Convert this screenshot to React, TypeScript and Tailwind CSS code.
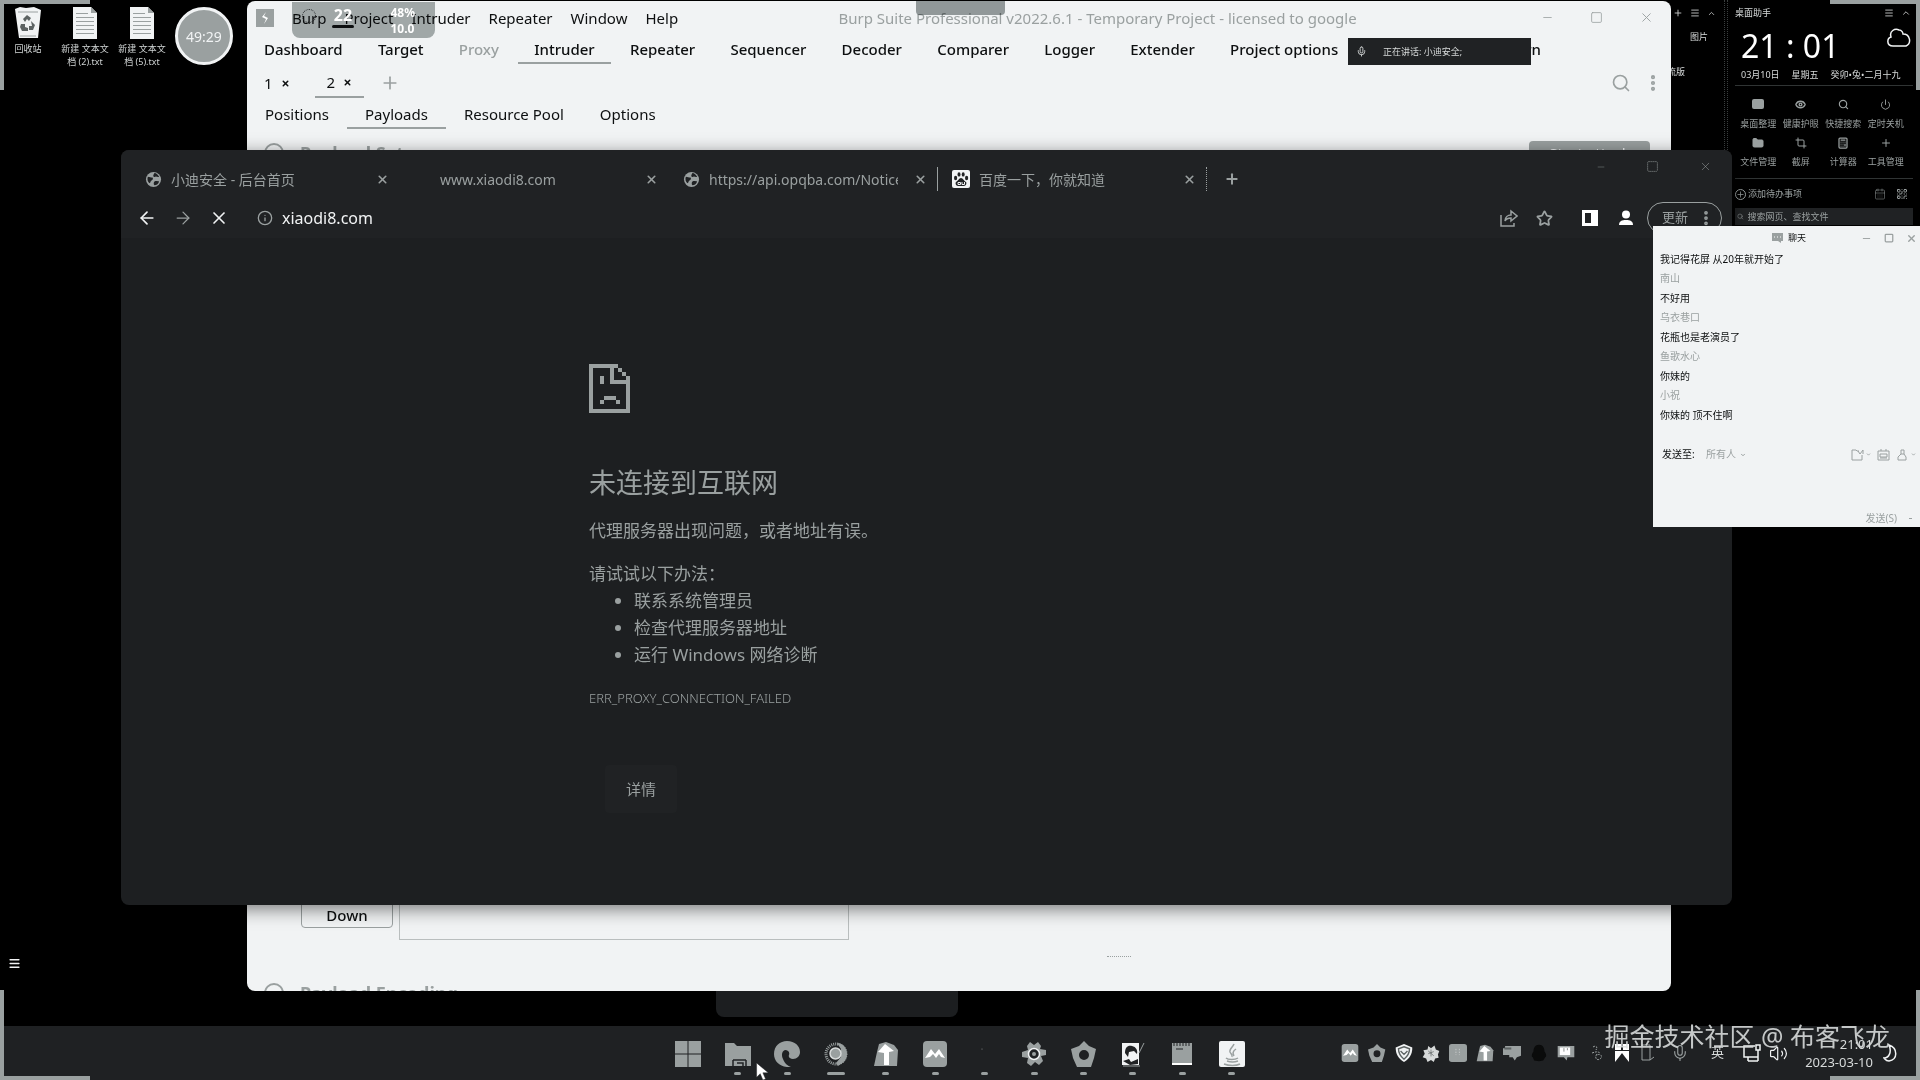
import type { ReactNode } from "react";
import {
  ArrowLeft,
  ArrowRight,
  Calculator,
  CalendarDays,
  ChevronDown,
  ChevronUp,
  Crop,
  Eye,
  Folder,
  Info,
  Menu,
  Mic,
  Minus,
  MoreVertical,
  Plus,
  Power,
  QrCode,
  Search,
  Square,
  Star,
  Volume2,
  X,
} from "lucide-react";

const burpMenus = ["Burp", "Project", "Intruder", "Repeater", "Window", "Help"];

const burpTools = [
  "Dashboard",
  "Target",
  "Proxy",
  "Intruder",
  "Repeater",
  "Sequencer",
  "Decoder",
  "Comparer",
  "Logger",
  "Extender",
  "Project options",
  "User options",
  "Learn",
];

const payloadTabs = ["Positions", "Payloads", "Resource Pool", "Options"];

const browserTabs = [
  { title: "小迪安全 - 后台首页", icon: "globe" },
  { title: "www.xiaodi8.com", icon: "none" },
  { title: "https://api.opqba.com/Notice", icon: "globe" },
  { title: "百度一下，你就知道", icon: "baidu" },
];

const messages = [
  { text: "我记得花屏 从20年就开始了", name: "南山" },
  { text: "不好用", name: "乌衣巷口" },
  { text: "花瓶也是老演员了", name: "鱼歌水心" },
  { text: "你妹的", name: "小祝" },
  { text: "你妹的 顶不住啊", name: "" },
];

const GlobeIcon = () => (
  <svg viewBox="0 0 18 18" className="size-[17px] shrink-0">
    <circle cx="9" cy="9" r="8" fill="#9aa0a0" />
    <path d="M3 6c2 0 3 1 5 1 1 1 0 3-1 3s-1 2-2 3c-2-1-3-4-2-7zM10 2c2 0 4 2 5 4-2 1-3-1-4 0s-3 0-2-2zM10 11c2-1 4 0 5 0-1 3-3 4-5 4-1-1-1-3 0-4z" fill="#202224" />
  </svg>
);

const BaiduIcon = () => (
  <svg viewBox="0 0 18 18" className="size-[18px] shrink-0">
    <rect width="18" height="18" rx="2" fill="#f1f3f4" />
    <g fill="#202224">
      <ellipse cx="3.6" cy="8" rx="1.6" ry="2.2" />
      <ellipse cx="7" cy="4.4" rx="1.5" ry="2.2" />
      <ellipse cx="11.2" cy="4.4" rx="1.5" ry="2.2" />
      <ellipse cx="14.6" cy="8" rx="1.6" ry="2.2" />
      <path d="M9 8c-2 0-3 3-5 4-1 1 0 4 2 4h6c2 0 3-3 2-4-2-1-3-4-5-4z" />
    </g>
    <path d="M6 12.500h2.500v2H6zM10 12v2.500h2.500V12" fill="none" stroke="#f1f3f4" />
  </svg>
);

const SadPageIcon = () => (
  <svg viewBox="0 0 41 49" className="h-[49px] w-[41px]" fill="#9aa0a0">
    <path d="M0 0h29v4h4v4h4v4h4v37H0zM4 4v41h33V20H21V4zM25 4v12h12v-4h-4V8h-4V4z" fillRule="evenodd" />
    <path d="M11 12h4v8h-4zM15 32h12v4H15zM11 36h4v4h-4zM27 36h4v4h-4z" />
  </svg>
);

const FileIcon = () => (
  <svg viewBox="0 0 26 32" className="h-8 w-[26px]">
    <path d="M1 0h18l6 6v26H1z" fill="#f1f3f4" />
    <path d="M19 0v6h6zM4 6h12v1H4zM4 10h18v1H4zM4 14h18v1H4zM4 18h18v1H4zM4 22h18v1H4zM4 26h18v1H4z" fill="#9aa0a0" />
  </svg>
);

const BinIcon = () => (
  <svg viewBox="0 0 28 32" className="h-8 w-7">
    <path d="M1 2l5-2 6 1 8-1 7 3-3 28H5z" fill="#f1f3f4" />
    <path d="M4 5h20M6 29h16" stroke="#9aa0a0" />
    <path d="M9 12l4-4 4 3-2 3-2-2-2 3zM17 14l4 4-2 5h-4v-4l3 0zM7 17h4v3l3 1v3H8l-2-4z" fill="#5d6363" />
  </svg>
);

const DesktopIcon = ({ label, children }: { label: string; children: ReactNode }) => (
  <button className="flex w-12 flex-col items-center gap-[3px] text-center text-[9px] leading-[13px] text-[#d0d4d4]">
    {children}
    <span>{label}</span>
  </button>
);

/* ---------- taskbar drawings, all on a 26x26 canvas ---------- */

const TowerShape = () => (
  <>
    <path d="M6 3l7-2 8 3 4 5-1 16H1L4 11z" fill="#9aa0a0" />
    <path d="M12 3l9 7-5 1v13h-5V12l-6-1z" fill="#fff" />
  </>
);

const MountainShape = () => (
  <>
    <rect x="1" width="24" height="26" rx="4" fill="#9aa0a0" />
    <path d="M3 17l6-9 4 5 4-5 6 9-4-1-2-3-3 4-3-4-3 3z" fill="#fff" />
  </>
);

const PentagonShape = () => (
  <path d="M13 0l5 5 7 3-2 9-3 9H6L2 17 0 8l8-3zM13 9a5 5 0 100 10 5 5 0 000-10z" fill="#9aa0a0" fillRule="evenodd" />
);

const taskbarApps = [
  {
    name: "Start",
    mark: "none",
    art: <path d="M0 0h12.500v12.500H0zM13.500 0H26v12.500H13.500zM0 13.500h12.500V26H0zM13.500 13.500H26V26H13.500z" fill="#9aa0a0" />,
  },
  {
    name: "Explorer",
    mark: "dot",
    art: (
      <>
        <path d="M0 2h9l3 3h14v20H0z" fill="#9aa0a0" />
        <path d="M8 19h13M8 19v6M21 19v6M12 22h6v3" fill="none" stroke="#202224" strokeWidth="1.500" />
      </>
    ),
  },
  {
    name: "Edge",
    mark: "dot",
    art: (
      <path d="M0 13C0 5 6 0 13 0c8 0 13 5 13 11 0 4-3 7-7 7-3 0-5-2-4-4 1-3-1-5-4-5-3 1-4 5-2 9 2 5 5 7 8 8C7 27 0 21 0 13z" fill="#9aa0a0" />
    ),
  },
  {
    name: "Chrome",
    mark: "bar",
    art: (
      <>
        <circle cx="13" cy="13" r="10" fill="none" stroke="#9aa0a0" strokeWidth="3" strokeDasharray="1 1" />
        <path d="M14 2c6 0 10 5 10 11s-4 9-9 12l-2-3 5-6V8z" fill="#9aa0a0" />
        <circle cx="12.500" cy="12.500" r="5.500" fill="#9aa0a0" stroke="#d7dada" strokeWidth="1.500" />
      </>
    ),
  },
  { name: "Tower", mark: "dot", art: <TowerShape /> },
  { name: "Meeting", mark: "dot", art: <MountainShape /> },
  { name: "Terminal", mark: "dot", art: <circle cx="10" cy="8" r="0.500" fill="#9aa0a0" /> },
  {
    name: "Settings",
    mark: "dot",
    art: (
      <>
        <path d="M9 1l4 3 4-3 3 4-1 3 6 1v5l-5 1 2 5-4 4-4-3-4 4-4-3 1-5-6-1v-5l6-2-1-4z" fill="#9aa0a0" />
        <circle cx="13" cy="13" r="5.500" fill="#202224" stroke="#f1f3f4" strokeWidth="1.500" />
        <circle cx="13" cy="13" r="2" fill="#9aa0a0" />
      </>
    ),
  },
  { name: "Pentagon", mark: "dot", art: <PentagonShape /> },
  {
    name: "Portrait",
    mark: "dot",
    art: (
      <>
        <path d="M2 2h17v22H2z" fill="#f1f3f4" />
        <path d="M5 12C5 6 8 4 12 5s6 4 5 8l-3-3-5 1-1 5z" fill="#202224" />
        <path d="M3 20l6-2 2 3 7-3v5l-8 1z" fill="#202224" />
        <path d="M24 2l-5 10M3 25h17" stroke="#9aa0a0" />
      </>
    ),
  },
  {
    name: "Notepad",
    mark: "dot",
    art: (
      <>
        <path d="M3 2h20v22H3z" fill="#9aa0a0" />
        <path d="M5 2v3M8 2v3M11 2v3M14 2v3M17 2v3M20 2v3M7 8h7" stroke="#202224" />
        <path d="M3 23h20" stroke="#fff" strokeWidth="2" />
      </>
    ),
  },
  {
    name: "Java",
    mark: "dot",
    art: (
      <>
        <rect width="26" height="26" rx="2" fill="#f1f3f4" />
        <path d="M15 3c-1 3-5 5-4 8 1 2 3 3 2 5M17 8c-3 2-4 4-2 7M7 17c2 2 9 2 12 0M8 20c3 1 8 1 11 0M5 23c5 2 12 2 16 0" fill="none" stroke="#9aa0a0" strokeWidth="1.500" />
      </>
    ),
  },
];

const trayApps = [
  { name: "Meeting", art: <MountainShape /> },
  { name: "Pentagon", art: <PentagonShape /> },
  {
    name: "Shield",
    art: (
      <>
        <path d="M13 0l12 5c0 10-4 16-12 21C5 21 1 15 1 5z" fill="#f1f3f4" />
        <path d="M13 4l8 3c0 6-3 11-8 15C8 18 5 13 5 7zM8 10l5 5 5-5" fill="none" stroke="#5d6363" strokeWidth="2" />
      </>
    ),
  },
  {
    name: "Flower",
    art: (
      <>
        <path d="M9 3l4 3 5-4 2 6 5 2-2 5 1 5-5 1-2 5-4-3-5 3-2-5-5-2 3-5-2-5 6-1z" fill="#d7dada" />
        <path d="M13 8v10M9 14l8-3M9 10l8 7" stroke="#5d6363" />
      </>
    ),
  },
  {
    name: "Panel",
    art: (
      <>
        <rect width="26" height="26" rx="4" fill="#9aa0a0" />
        <path d="M10 7v9M15 7v9" stroke="#d7dada" strokeDasharray="2 2" />
      </>
    ),
  },
  { name: "Tower", art: <TowerShape /> },
  {
    name: "Desk chat",
    art: (
      <>
        <path d="M3 3h23v14l-6 2-3 5-3-5H9v-3H0V6h3z" fill="#9aa0a0" />
        <path d="M2 5h10v3H2z" fill="#5d6363" />
      </>
    ),
  },
  {
    name: "Penguin",
    art: <path d="M13 1c6 0 8 5 8 10 3 4 3 8 1 8l-3 5-6 1-7-1-2-5c-2 0-2-4 1-8 0-5 2-10 8-10z" fill="#0a0b0b" />,
  },
  {
    name: "Notice",
    art: (
      <>
        <path d="M1 3h24v16H15l-1 5-4-5H1z" fill="#9aa0a0" />
        <path d="M4 5h15v11H4z" fill="#fff" />
        <path d="M10 6v5M15 6v3" stroke="#5d6363" />
      </>
    ),
  },
];

const BurpWindow = () => (
  <section className="absolute top-px right-[249px] bottom-[89px] left-[247px] flex flex-col overflow-hidden rounded-lg bg-[#f1f3f4] text-[15px] leading-5 text-[#0d0f10]">
    <header className="flex h-[35px] shrink-0 items-center pr-[17px] pb-[2px] pl-[9px]">
      <svg viewBox="0 0 18 18" className="size-[18px] shrink-0">
        <rect width="18" height="18" fill="#9aa0a0" />
        <path d="M10 3L6 8l4 2-2 5 4-6-4-2z" fill="#fff" />
      </svg>
      <nav className="flex gap-[18px] pl-[18px]">
        {burpMenus.map((menu) => (
          <button key={menu}>{menu}</button>
        ))}
      </nav>
      <h1 className="flex-1 pl-4 text-center text-[#9aa0a0]">
        Burp Suite Professional v2022.6.1 - Temporary Project - licensed to google
      </h1>
      <div className="flex items-center gap-9 pl-10 text-[#9aa0a0]">
        <button aria-label="Minimize"><Minus size={13} strokeWidth={1.5} /></button>
        <button aria-label="Maximize"><Square size={13} strokeWidth={1.5} /></button>
        <button aria-label="Close"><X size={15} strokeWidth={1.5} /></button>
      </div>
    </header>

    <nav className="mr-[114px] flex h-7 shrink-0 justify-between pl-px font-medium">
      {burpTools.map((tool) => (
        <button
          key={tool}
          className={`border-b-2 px-4 whitespace-nowrap ${tool === "Intruder" ? "border-[#9aa0a0]" : "border-transparent"} ${tool === "Proxy" ? "text-[#9aa0a0]" : ""}`}
        >
          {tool}
        </button>
      ))}
    </nav>

    <div className="mt-1 flex h-[30px] shrink-0 items-stretch pr-2">
      <button className="flex items-center gap-2 px-[17px]">1 <X size={9} strokeWidth={4} /></button>
      <button className="ml-2 flex items-center gap-2 border-b-2 border-[#9aa0a0] px-3">2 <X size={9} strokeWidth={4} /></button>
      <button aria-label="Add tab" className="ml-4 text-[#9aa0a0]"><Plus size={20} strokeWidth={2} /></button>
      <div className="ml-auto flex items-center gap-3 text-[#9aa0a0]">
        <button aria-label="Search"><Search size={20} /></button>
        <button aria-label="More"><MoreVertical size={20} strokeWidth={3} /></button>
      </div>
    </div>

    <nav className="mt-[3px] flex h-7 shrink-0">
      {payloadTabs.map((tab) => (
        <button
          key={tab}
          className={`border-b-2 px-[18px] ${tab === "Payloads" ? "border-[#9aa0a0]" : "border-transparent"}`}
        >
          {tab}
        </button>
      ))}
    </nav>

    <div className="mt-3 flex shrink-0 justify-between pr-[21px] pl-[17px] text-[#9aa0a0]">
      <div className="flex items-center gap-4">
        <span className="size-5 rounded-full border-2 border-[#9aa0a0]" />
        <h2 className="text-lg leading-6 font-bold">Payload Sets</h2>
      </div>
      <button className="h-6 w-[121px] rounded bg-[#9aa0a0] text-[#f1f3f4]">Start attack</button>
    </div>

    <div className="mt-auto h-[100px] shrink-0">
      <div className="flex h-[49px] items-start gap-[6px] pl-[54px]">
        <button className="h-[37px] w-[92px] rounded-sm border border-[#9aa0a0] pt-[11px] font-medium">Down</button>
        <div className="h-full w-[450px] border border-[#b9bebe]" />
      </div>
      <div className="mt-4 ml-[860px] w-6 border-t border-dotted border-[#9aa0a0]" />
      <div className="mt-6 flex items-center gap-4 pl-[17px] text-[#9aa0a0]">
        <span className="size-5 rounded-full border-2 border-[#9aa0a0]" />
        <h2 className="text-lg leading-6 font-bold">Payload Encoding</h2>
      </div>
    </div>
  </section>
);

const BrowserWindow = () => (
  <section className="absolute top-[150px] right-[188px] bottom-[175px] left-[121px] flex flex-col overflow-hidden rounded-lg bg-[#1d1f21] text-[15px] text-[#9aa0a0] shadow-[0_4px_18px_rgba(0,0,0,0.5)]">
    <div className="relative flex h-12 shrink-0 items-center bg-[#202224] pt-[10px] pl-[10px]">
      {browserTabs.map((tab, index) => (
        <div
          key={tab.title}
          className={`flex h-6 w-[269px] items-center border-r pr-[10px] pl-[14px] text-[14px] ${index === 2 ? "border-[#9aa0a0]" : index === 3 ? "border-dotted border-[#9aa0a0]" : "border-transparent"}`}
        >
          {tab.icon === "globe" && <GlobeIcon />}
          {tab.icon === "baidu" && <BaiduIcon />}
          {tab.icon === "none" && <span className="w-[17px]" />}
          <span className="mr-4 ml-[9px] flex-1 overflow-hidden whitespace-nowrap">{tab.title}</span>
          <button aria-label="Close tab"><X size={13} strokeWidth={3} /></button>
        </div>
      ))}
      <button aria-label="New tab" className="ml-[17px]"><Plus size={16} strokeWidth={3} /></button>
      <div className="absolute top-[10px] right-5 flex items-center gap-10">
        <button aria-label="Minimize"><Minus size={10} strokeWidth={1} /></button>
        <button aria-label="Maximize"><Square size={13} strokeWidth={1} strokeDasharray="2 2" /></button>
        <button aria-label="Close"><X size={13} strokeWidth={1} /></button>
      </div>
    </div>

    <div className="flex h-10 shrink-0 items-center bg-[#202224] pr-[10px] pl-4">
      <div className="flex gap-4">
        <button aria-label="Back" className="text-[#f1f3f4]"><ArrowLeft size={20} /></button>
        <button aria-label="Forward"><ArrowRight size={20} strokeWidth={1.5} /></button>
        <button aria-label="Stop" className="text-[#f1f3f4]"><X size={20} /></button>
      </div>
      <Info size={16} className="ml-7" />
      <input
        aria-label="Address"
        defaultValue="xiaodi8.com"
        className="ml-[9px] flex-1 bg-transparent text-base text-[#f1f3f4] outline-none"
      />
      <div className="flex items-center">
        <button aria-label="Share">
          <svg viewBox="0 0 18 18" className="size-[18px]" fill="none" stroke="#9aa0a0" strokeWidth="1.500">
            <path d="M1 6v11h13v-3M5 12c0-4 3-6 6-6V2l6 5-6 5V9c-3 0-5 1-6 3z" />
          </svg>
        </button>
        <button aria-label="Bookmark" className="ml-[18px]"><Star size={17} strokeWidth={2.5} /></button>
        <button aria-label="Side panel" className="ml-[29px]">
          <svg viewBox="0 0 16 16" className="size-4">
            <path d="M0 0h16v16H0zM3 3v10h6V3z" fill="#fff" fillRule="evenodd" />
          </svg>
        </button>
        <button aria-label="Profile" className="ml-5">
          <svg viewBox="0 0 16 16" className="size-4" fill="#fff">
            <circle cx="8" cy="4.500" r="4" />
            <path d="M1 15c0-4 3-5 7-5s7 1 7 5z" />
          </svg>
        </button>
        <button className="ml-[13px] flex h-8 w-[75px] items-center justify-between rounded-full border border-[#9aa0a0] pr-[6px] pl-[14px] text-[13px]">
          更新 <MoreVertical size={18} strokeWidth={3} />
        </button>
      </div>
    </div>

    <main className="flex-1 pt-[126px] pl-[468px] text-[17px] leading-[27px]">
      <SadPageIcon />
      <h2 className="mt-[50px] text-[27px] leading-10">未连接到互联网</h2>
      <p className="mt-[14px]">代理服务器出现问题，或者地址有误。</p>
      <p className="mt-4">请试试以下办法：</p>
      <ul className="list-disc pl-[45px]">
        <li>联系系统管理员</li>
        <li>检查代理服务器地址</li>
        <li>运行 Windows 网络诊断</li>
      </ul>
      <p className="mt-[17px] text-[13px] font-light">ERR_PROXY_CONNECTION_FAILED</p>
      <button className="mt-[53px] ml-4 h-12 w-[72px] rounded bg-[#202224] text-[15px]">详情</button>
    </main>
  </section>
);

const helperTools = [
  { label: "桌面整理", icon: <span className="block h-[10px] w-3 rounded-xs bg-[#9aa0a0]" /> },
  { label: "健康护眼", icon: <Eye size={11} strokeWidth={3} /> },
  { label: "快捷搜索", icon: <Search size={11} strokeWidth={2.5} /> },
  { label: "定时关机", icon: <Power size={11} /> },
  { label: "文件管理", icon: <Folder size={12} fill="#9aa0a0" /> },
  { label: "截屏", icon: <Crop size={12} /> },
  { label: "计算器", icon: <Calculator size={12} strokeWidth={2.5} /> },
  { label: "工具管理", icon: <Plus size={12} /> },
];

const DesktopHelper = () => (
  <aside className="absolute top-0 right-0 flex h-[226px] w-[249px] text-[9px] leading-3 text-[#d7dada]">
    <div className="w-[54px] border-r border-dotted border-[#3a3e3e] pt-2">
      <div className="flex items-center justify-end gap-[7px] pr-[8px]">
        <Plus size={10} />
        <Menu size={10} />
        <ChevronUp size={9} />
      </div>
      <p className="mt-[13px] pr-4 text-right">图片</p>
      <p className="mt-[23px] -ml-1">流版</p>
    </div>
    <div className="ml-[2px] flex flex-1 flex-col border-l border-dotted border-[#3a3e3e] px-[7px] pt-[7px]">
      <div className="flex items-center justify-between pr-[2px]">
        <h2>桌面助手</h2>
        <div className="flex gap-[7px]">
          <Menu size={10} />
          <ChevronUp size={10} />
        </div>
      </div>
      <div className="flex h-12 items-start justify-between pr-[2px] pl-[6px]">
        <p className="pt-[7px] text-[32px] leading-10 whitespace-pre text-white">21 : 01</p>
        <svg viewBox="0 0 24 20" className="mt-[9px] h-5 w-6" fill="none" stroke="#f1f3f4" strokeWidth="1.500">
          <path d="M6 18c-7 0-6-8-2-9C2 3 8 0 12 2c3 0 4 3 4 4 7 0 9 9 3 12z" />
        </svg>
      </div>
      <p className="mt-[2px] flex gap-3 border-b border-[#303434] pb-[4px] pl-[6px]">
        <span>03月10日</span>
        <span>星期五</span>
        <span>癸卯•兔•二月十九</span>
      </p>
      <div className="mt-[13px] grid grid-cols-4 gap-y-[7px] pr-[6px] pl-[2px] text-[#9aa0a0]">
        {helperTools.map((tool) => (
          <button key={tool.label} className="flex h-[31px] flex-col items-center justify-between whitespace-nowrap">
            {tool.icon}
            <span>{tool.label}</span>
          </button>
        ))}
      </div>
      <div className="mt-[10px] flex items-center gap-[2px] border-t border-[#303434] pt-[9px] pr-[5px] text-[#9aa0a0]">
        <Plus size={11} className="rounded-full border border-[#9aa0a0]" />
        <input aria-label="添加待办事项" placeholder="添加待办事项" className="w-0 flex-1 bg-transparent placeholder:text-[#9aa0a0]" />
        <CalendarDays size={12} strokeWidth={1} />
        <QrCode size={12} className="ml-2" />
      </div>
      <label className="mt-2 flex h-[17px] items-center gap-1 bg-[#202224] px-[2px] text-[#9aa0a0]">
        <Search size={7} />
        <input aria-label="搜索" placeholder="搜索网页、查找文件" className="w-full bg-transparent placeholder:text-[#9aa0a0]" />
      </label>
    </div>
  </aside>
);

const ChatWindow = () => (
  <section className="absolute top-[226px] right-0 flex h-[301px] w-[267px] flex-col bg-[#f1f3f4] text-[10px] text-[#0d0f10]">
    <header className="flex h-6 items-center justify-end gap-3 pr-[3px] text-[#9aa0a0]">
      <div className="mr-[43px] flex items-center gap-[5px]">
        <svg viewBox="0 0 11 10" className="h-[10px] w-[11px]">
          <path d="M0 0h11v8H9v2L6 8H0z" fill="#9aa0a0" />
          <path d="M2 4h1M5 4h1M8 4h1" stroke="#fff" />
        </svg>
        <h2 className="text-[9px] text-[#0d0f10]">聊天</h2>
      </div>
      <button aria-label="Minimize"><Minus size={11} /></button>
      <button aria-label="Maximize"><Square size={10} strokeWidth={3} /></button>
      <button aria-label="Close"><X size={11} strokeWidth={3} /></button>
    </header>
    <ul className="px-[7px]">
      {messages.map((message) => (
        <li key={message.text} className="h-[39px] leading-[19px]">
          <p>{message.text}</p>
          <p className="text-[#9aa0a0]">{message.name}</p>
        </li>
      ))}
    </ul>
    <div className="mt-[2px] flex items-center pr-1 pl-[9px]">
      <label htmlFor="send-to" className="w-11">发送至:</label>
      <select id="send-to" className="appearance-none bg-transparent text-[#9aa0a0]">
        <option>所有人</option>
      </select>
      <ChevronDown size={6} strokeWidth={4} className="ml-1 text-[#9aa0a0]" />
      <div className="ml-auto flex items-center text-[#9aa0a0]">
        <button aria-label="Send file" className="flex items-center gap-[2px]">
          <svg viewBox="0 0 13 12" className="h-3 w-[13px]" fill="none" stroke="#9aa0a0">
            <path d="M8 2H6L5 1H1v10h10V6M7 2l2 3 3-4v4" />
          </svg>
          <ChevronDown size={5} strokeWidth={4} />
        </button>
        <button aria-label="Picture" className="ml-[6px]">
          <svg viewBox="0 0 13 12" className="h-3 w-[13px]" fill="none" stroke="#9aa0a0">
            <path d="M1 2h11v9H1zM4 0v2M9 0v2M3 5h7v3H3zM3 9h7" />
          </svg>
        </button>
        <button aria-label="Member" className="ml-[7px] flex items-center gap-[3px]">
          <svg viewBox="0 0 11 12" className="h-3 w-[11px]" fill="none" stroke="#9aa0a0">
            <path d="M4 1h3v4H4zM4 5L1 8v3h8V8L7 5" />
          </svg>
          <ChevronDown size={5} strokeWidth={4} />
        </button>
      </div>
    </div>
    <textarea aria-label="Message" className="mt-1 flex-1 resize-none bg-transparent px-[9px] outline-none" />
    <div className="flex items-center justify-end gap-3 pr-2 text-[#9aa0a0]">
      <button className="leading-[18px]">发送(S)</button>
      <span className="h-px w-[3px] bg-[#9aa0a0]" />
    </div>
  </section>
);

const Taskbar = () => (
  <footer className="absolute inset-x-0 bottom-0 h-[54px] bg-[#1f2123]">
    <div className="mx-auto grid h-full w-[593px] grid-cols-12">
      {taskbarApps.map((app) => (
        <button key={app.name} aria-label={app.name} className="flex flex-col items-center pt-[15px]">
          <svg viewBox="0 0 26 26" className="size-[26px]">{app.art}</svg>
          {app.mark !== "none" && (
            <span className={`mt-[5px] h-[3px] rounded-full bg-[#9aa0a0] ${app.mark === "bar" ? "w-[18px]" : "w-[7px]"}`} />
          )}
        </button>
      ))}
    </div>
    <div className="absolute top-0 right-[23px] flex h-full items-center text-[13px] text-[#d7dada]">
      <div className="grid auto-cols-[27px] grid-flow-col">
        {trayApps.map((app) => (
          <button key={app.name} aria-label={app.name} className="flex justify-center">
            <svg viewBox="0 0 26 26" className="size-[18px]">{app.art}</svg>
          </button>
        ))}
      </div>
      <svg viewBox="0 0 12 18" className="ml-3 h-[18px] w-3" fill="none" stroke="#9aa0a0">
        <path d="M2 3c3-2 5 0 3 3M1 9c3-1 5-2 8 0M6 10c-3 4 0 7 3 5s1-6-3-4" strokeDasharray="2 1" />
      </svg>
      <svg viewBox="0 0 14 18" className="ml-3 h-[18px] w-[14px]">
        <path d="M0 0h6v6H0zM8 0h6v6H8zM0 7h14v11l-4-5-3-4-3 4-4 5z" fill="#fff" />
      </svg>
      <svg viewBox="0 0 14 18" className="ml-3 h-[18px] w-[14px]" fill="none" stroke="#9aa0a0">
        <path d="M1 1h8v15H1zM9 16l4-3" />
      </svg>
      <Mic size={18} strokeWidth={1.5} className="ml-4 text-[#9aa0a0]" />
      <span className="ml-[22px]">英</span>
      <svg viewBox="0 0 18 18" className="ml-[19px] size-[18px]" fill="none" stroke="#f1f3f4" strokeWidth="1.500">
        <path d="M12 2H1v11h14V9M5 17h10M5 13v4M13 1h4v5h-4zM15 6v11" />
      </svg>
      <Volume2 size={19} strokeWidth={1.5} className="ml-2 text-[#f1f3f4]" />
      <p className="ml-[17px] text-right leading-[18px]">
        21:01
        <br />
        2023-03-10
      </p>
      <svg viewBox="0 0 14 18" className="ml-[10px] h-[18px] w-[14px]" fill="none" stroke="#f1f3f4" strokeWidth="1.500">
        <path d="M6 1c9 3 9 15 0 16-3 0-4-2-5-3 5 0 8-6 5-13z" />
      </svg>
    </div>
  </footer>
);

/* Corner brackets that frame the shared screen */
const ShareFrame = () => (
  <div className="pointer-events-none absolute inset-0">
    <span className="absolute top-0 left-0 size-[90px] border-t-4 border-l-4 border-[#9aa0a0]" />
    <span className="absolute top-0 right-0 size-[90px] border-t-4 border-r-4 border-[#9aa0a0]" />
    <span className="absolute bottom-0 left-0 size-[90px] border-b-4 border-l-4 border-[#9aa0a0]" />
    <span className="absolute right-0 bottom-0 size-[90px] border-r-4 border-b-4 border-[#9aa0a0]" />
  </div>
);

const App = () => {
  return (
    <div className="relative h-screen w-full overflow-hidden bg-black font-['Noto_Sans','Noto_Sans_CJK_SC',sans-serif]">
      <div className="flex gap-[9px] pt-[7px] pl-1">
        <DesktopIcon label="回收站"><BinIcon /></DesktopIcon>
        <DesktopIcon label="新建 文本文档 (2).txt"><FileIcon /></DesktopIcon>
        <DesktopIcon label="新建 文本文档 (5).txt"><FileIcon /></DesktopIcon>
        <time className="flex size-[58px] items-center justify-center rounded-full border-[3px] border-[#f1f3f4] bg-[#9aa0a0] text-[14px] text-[#f1f3f4]">
          49:29
        </time>
      </div>
      <button aria-label="List" className="absolute bottom-[110px] left-2 text-[#f1f3f4]">
        <Menu size={13} strokeWidth={3} />
      </button>

      <DesktopHelper />
      <BurpWindow />

      {/* weather / network pill hanging from the top edge, menu text shows through */}
      <div className="absolute top-[2px] left-[292px] h-9 w-[143px] rounded-b-lg bg-[#a9afaf] mix-blend-multiply" />
      <div className="absolute top-[2px] left-[292px] flex h-9 w-[143px] items-start pt-[3px] pl-[10px] text-white">
        <span className="mt-1 size-[14px] rounded-full border border-dotted border-[#202224]" />
        <span className="ml-4 flex flex-col items-center text-[16px] leading-5 font-bold">
          22
          <span className="h-[3px] w-[22px] rounded-full bg-[#0d0f10]" />
        </span>
        <span className="ml-auto pr-5 text-[12px] leading-4 font-bold">
          48%
          <br />
          10.0
        </span>
      </div>
      <div className="absolute top-0 left-[916px] h-[15px] w-[89px] rounded-b bg-[#9aa0a0] mix-blend-multiply" />
      <div className="absolute top-[38px] left-[1348px] flex h-[27px] w-[183px] items-center bg-[#202224] pl-2 text-[9px] text-[#d7dada]">
        <Mic size={11} />
        <span className="ml-4">正在讲话: 小迪安全;</span>
      </div>

      <BrowserWindow />
      <ChatWindow />

      <div className="absolute bottom-[63px] left-[716px] h-[26px] w-[242px] rounded-b-lg bg-[#1c1e20]" />
      <Taskbar />
      <ShareFrame />

      <p className="absolute right-[30px] bottom-[26px] text-[25px] leading-9 text-[#d7dada]/90">
        掘金技术社区 @ 布客飞龙
      </p>
      <svg viewBox="0 0 14 20" className="absolute bottom-0 left-[755px] h-[18px] w-[14px]">
        <path d="M1 1v16l4-4 3 7 3-1-3-7h6z" fill="#fff" stroke="#202224" strokeWidth="0.500" />
      </svg>
    </div>
  );
};

export default App;
